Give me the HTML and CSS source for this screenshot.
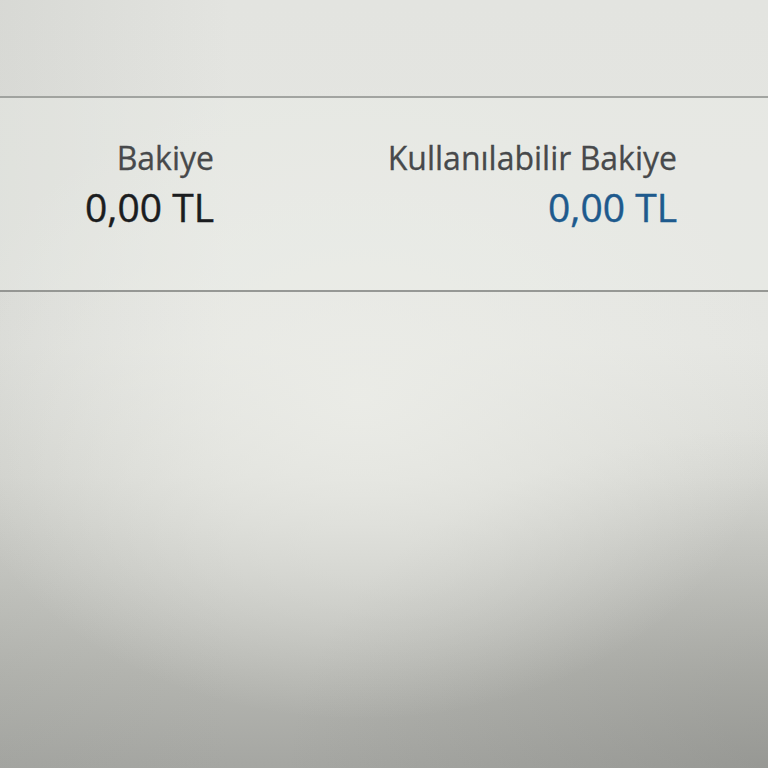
FILE: index.html
```html
<!DOCTYPE html>
<html lang="tr">
<head>
<meta charset="utf-8">
<title>Bakiye</title>
<link rel="stylesheet" href="styles.css">
</head>
<body>
  <div class="screen">
    <header class="topbar"></header>
    <section class="balance">
      <div class="balance-item">
        <div class="balance-label">Bakiye</div>
        <div class="balance-value">0,00 TL</div>
      </div>
      <div class="balance-item">
        <div class="balance-label">Kullanılabilir Bakiye</div>
        <div class="balance-value balance-value--available">0,00 TL</div>
      </div>
    </section>
    <main class="content"></main>
  </div>
</body>
</html>
```
FILE: styles.css
```css
html, body {
  margin: 0;
  height: 100%;
}

body {
  font-family: "Open Sans", "Noto Sans", sans-serif;
  background-color: #e2e3df;
}

.screen {
  min-height: 768px;
  display: flex;
  flex-direction: column;
  background:
    radial-gradient(ellipse 420px 320px at 360px 400px, rgba(236, 237, 232, 0.85) 0%, rgba(236, 237, 232, 0) 100%),
    radial-gradient(ellipse 480px 340px at 768px 768px, rgba(125, 126, 122, 0.35) 0%, rgba(125, 126, 122, 0) 100%),
    linear-gradient(90deg, rgba(150, 152, 147, 0.15) 0%, rgba(150, 152, 147, 0) 30%),
    linear-gradient(180deg, #e3e4e0 0%, #e5e6e2 45%, #dadbd6 62%, #c8c9c4 75%, #b4b5b0 88%, #a5a6a2 100%);
}

.topbar {
  height: 96px;
}

.balance {
  display: grid;
  grid-template-columns: 214px 463px;
  padding: 40px 0 61px;
  border-top: 2px solid rgba(140, 142, 139, 0.75);
  border-bottom: 2px solid rgba(130, 132, 129, 0.8);
  background: rgba(236, 237, 233, 0.4);
}

.balance-item {
  display: flex;
  flex-direction: column;
  align-items: flex-end;
  gap: 7px;
}

.balance-label {
  font-size: 32px;
  line-height: 40px;
  color: #47494b;
  -webkit-text-stroke: 0.3px currentColor;
}

.balance-value {
  font-size: 39px;
  line-height: 44px;
  color: #1b1d1f;
  -webkit-text-stroke: 0.4px currentColor;
}

.balance-value--available {
  color: #1e5a8d;
}

.content {
  flex: 1;
}
```
